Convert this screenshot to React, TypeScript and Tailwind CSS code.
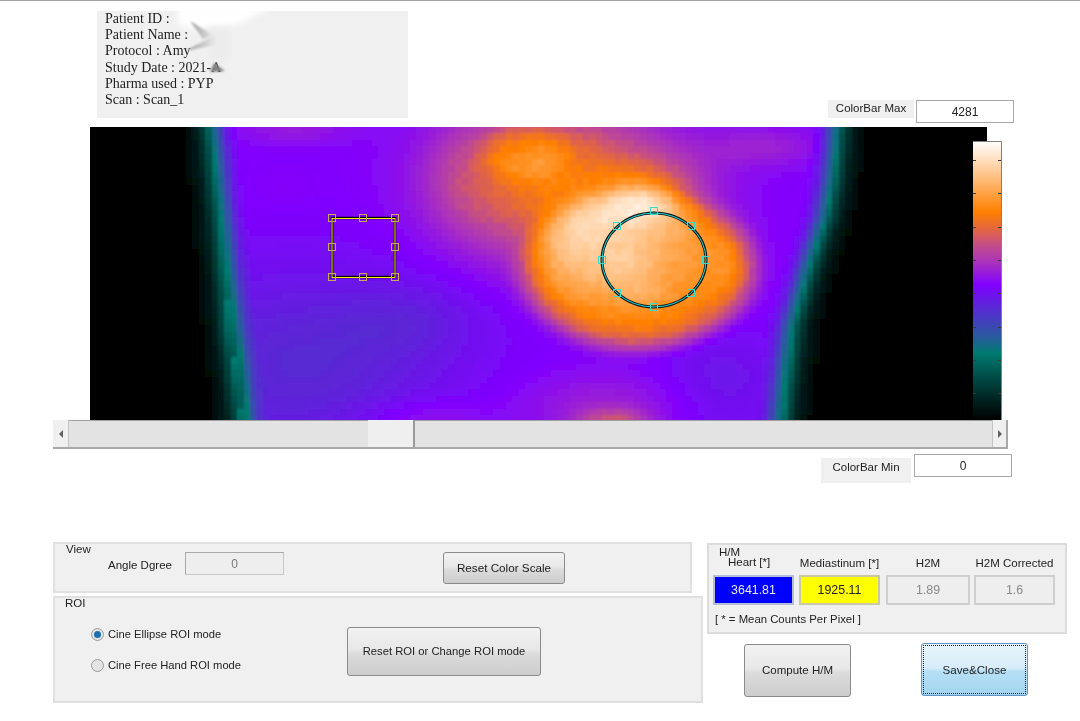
const STOPS: [number, string][] = [
  [0, "#000000"],
  [0.12, "#003a36"],
  [0.24, "#007a70"],
  [0.3, "#2a5aa0"],
  [0.484, "#8000ff"],
  [0.56, "#a830c0"],
  [0.62, "#c04a90"],
  [0.67, "#dc6050"],
  [0.745, "#ff8000"],
  [0.87, "#ffbf80"],
  [1, "#ffffff"],
];

function lerp(points: number[][], x: number) {
  if (x <= points[0][0]) return points[0][1];
  for (let i = 1; i < points.length; i++) {
    if (x <= points[i][0]) {
      const [x0, y0] = points[i - 1];
      const [x1, y1] = points[i];
      return y0 + ((y1 - y0) * (x - x0)) / (x1 - x0);
    }
  }
  return points[points.length - 1][1];
}

function colorAt(t: number) {
  let i = 1;
  while (i < STOPS.length - 1 && t > STOPS[i][0]) i++;
  const [t0, c0] = STOPS[i - 1];
  const [t1, c1] = STOPS[i];
  const k = Math.min(1, Math.max(0, (t - t0) / (t1 - t0)));
  const ch = (c: string, p: number) => parseInt(c.slice(p, p + 2), 16);
  const r = Math.round(ch(c0, 1) + (ch(c1, 1) - ch(c0, 1)) * k);
  const g = Math.round(ch(c0, 3) + (ch(c1, 3) - ch(c0, 3)) * k);
  const b = Math.round(ch(c0, 5) + (ch(c1, 5) - ch(c0, 5)) * k);
  return `rgb(${r},${g},${b})`;
}

const LEFT = [[127, 211], [235, 222], [330, 230], [420, 242]];
const RIGHT = [[127, 838], [180, 833], [218, 826], [250, 815], [275, 807], [325, 793], [420, 782]];
const RAMP = [[-45, 0], [-28, 0.012], [-15, 0.06], [-5, 0.16], [0, 0.24], [6, 0.3], [16, 0.43], [26, 0.485]];

// [x, y, sx, sy, amp, power] in page pixels
const BLOBS = [
  [525, 153, 36, 24, 0.09, 4],
  [560, 188, 75, 48, 0.25, 2],
  [570, 140, 50, 18, 0.03, 2],
  [470, 170, 28, 38, 0.05, 2],
  [650, 195, 24, 18, 0.09, 2],
  [650, 185, 40, 22, 0.07, 2],
  [638, 270, 104, 72, 0.26, 8],
  [640, 260, 60, 38, 0.05, 2],
  [575, 272, 28, 22, 0.03, 2],
  [625, 268, 22, 14, 0.05, 2],
  [640, 295, 20, 9, 0.05, 2],
  [733, 262, 15, 26, 0.05, 2],
  [612, 420, 24, 8, 0.12, 2],
  [610, 405, 70, 24, 0.05, 2],
  [420, 418, 45, 14, 0.05, 2],
  [763, 147, 42, 14, 0.05, 2],
  [295, 130, 40, 10, 0.04, 2],
  [285, 190, 25, 16, 0.01, 2],
  [300, 365, 110, 70, -0.085, 2],
  [410, 320, 50, 25, -0.035, 2],
  [720, 385, 45, 40, -0.05, 2],
];

function field(x: number, y: number) {
  const d = Math.min(x - lerp(LEFT, y), lerp(RIGHT, y) - x);
  let t = lerp(RAMP, d);
  if (d > 0) {
    for (const [bx, by, sx, sy, amp, p] of BLOBS) {
      const dx = (x - bx) / sx;
      const dy = (y - by) / sy;
      t += amp * Math.exp(-0.5 * Math.pow(dx * dx + dy * dy, p / 2));
    }
    // blocky count noise, only shows up in the hot area
    const n = Math.sin(x * 12.9898 + y * 78.233) * 43758.5453;
    if (t > 0.6) t += (n - Math.floor(n) - 0.5) * 0.025;
  }
  return Math.min(1, Math.max(0, t));
}

const CELL = 6.4;
const CELLS: { x: number; y: number; fill: string }[] = [];
for (let r = -3; r * CELL < 300; r++) {
  for (let c = -3; c * CELL < 905; c++) {
    CELLS.push({
      x: c * CELL,
      y: r * CELL,
      fill: colorAt(field(90 + c * CELL + CELL / 2, 127 + r * CELL + CELL / 2)),
    });
  }
}

const TICKS = [33, 66, 100, 133, 166, 200, 233, 266];

function Handle({ x, y, color }: { x: number; y: number; color: string }) {
  return <rect x={x - 3.5} y={y - 3.5} width={7} height={7} fill="none" stroke={color} strokeWidth={1} />;
}

function Heatmap() {
  const rectPts = [
    [242, 91], [273, 91], [305, 91],
    [242, 120], [305, 120],
    [242, 150], [273, 150], [305, 150],
  ];
  const ellipsePts = [
    [564, 84], [527, 99], [601, 99], [512, 133], [616, 133], [527, 166], [601, 166], [564, 180],
  ];
  return (
    <svg width={912} height={293} viewBox="0 0 912 293" className="block">
      <defs>
        <linearGradient id="bar" x1="0" y1="0" x2="0" y2="1">
          {[...STOPS].reverse().map(([t, c]) => (
            <stop key={t} offset={1 - t} stopColor={c} />
          ))}
        </linearGradient>
        <filter id="soft" filterUnits="userSpaceOnUse" x={-20} y={-20} width={960} height={340}>
          <feGaussianBlur stdDeviation="0.9" />
        </filter>
      </defs>
      <g filter="url(#soft)" shapeRendering="crispEdges">
        {CELLS.map((c) => (
          <rect key={`${c.x}-${c.y}`} x={c.x} y={c.y} width={CELL + 0.5} height={CELL + 0.5} fill={c.fill} />
        ))}
      </g>
      <rect x={897} y={0} width={15} height={14} fill="#ffffff" />
      <rect x={883} y={14} width={29} height={279} fill="#ffffff" />
      <rect x={883} y={14} width={28} height={279} fill="url(#bar)" />
      <path d="M883 14.5H911.5V293" fill="none" stroke="#808080" strokeWidth={1} />
      {TICKS.map((y) => (
        <path key={y} d={`M883 ${y + 0.5}h3M908 ${y + 0.5}h3`} stroke="#3a3a3a" strokeWidth={1} />
      ))}
      <rect x={242} y={91} width={63} height={59} fill="none" stroke="#000000" strokeWidth={2.4} />
      <rect x={242} y={91.5} width={63} height={59} fill="none" stroke="#f0f000" strokeWidth={1} />
      {rectPts.map(([x, y]) => (
        <Handle key={`${x}-${y}`} x={x} y={y} color="#c8a860" />
      ))}
      <ellipse cx={564} cy={133} rx={52} ry={47} fill="none" stroke="#101818" strokeWidth={3} />
      <ellipse cx={564} cy={133} rx={52} ry={47} fill="none" stroke="#20d8d8" strokeWidth={1} />
      {ellipsePts.map(([x, y]) => (
        <Handle key={`${x}-${y}`} x={x} y={y} color="#40d8c8" />
      ))}
    </svg>
  );
}

function Smudge() {
  return (
    <svg width={130} height={80} viewBox="0 0 130 80" className="absolute left-[68px] top-0 pointer-events-none">
      <defs>
        <filter id="smear" x="-20%" y="-20%" width="140%" height="140%">
          <feGaussianBlur stdDeviation="3" />
        </filter>
        <filter id="smear2" x="-20%" y="-20%" width="140%" height="140%">
          <feGaussianBlur stdDeviation="1" />
        </filter>
        <linearGradient id="spike" x1="0" y1="0" x2="1" y2="0">
          <stop offset="0" stopColor="#9a9a9a" />
          <stop offset="1" stopColor="#e8e8e8" />
        </linearGradient>
      </defs>
      <path d="M12 -4H106L76 12L36 20L14 14Z" fill="#ffffff" filter="url(#smear)" />
      <path d="M40 16H64V50H46Z" fill="#ececec" filter="url(#smear)" />
      <path d="M25 10L48 24L38 28Z" fill="url(#spike)" filter="url(#smear2)" />
      <path d="M20 40L50 24V34Z" fill="url(#spike)" filter="url(#smear2)" />
      <path d="M60 60L49 52L45 61Z" fill="#808080" filter="url(#smear2)" />
    </svg>
  );
}

function Scrollbar() {
  return (
    <div className="ml-[53px] flex h-[29px] w-[955px] border-b-2 border-[#a8a8a8] bg-[#e3e3e3]">
      <div className="flex w-[16px] items-center justify-center border-r border-[#c4c4c4] bg-[#f0f0f0]">
        <div className="h-0 w-0 border-y-[4px] border-r-[4px] border-y-transparent border-r-[#606060]" />
      </div>
      <div className="w-[299px] border-t border-[#a0a0a0]" />
      <div className="w-[47px] border-r-2 border-[#9a9a9a] bg-[#efefef]" />
      <div className="flex-1 border-t border-[#a0a0a0]" />
      <div className="flex w-[16px] items-center justify-center border-r-2 border-l border-[#a8a8a8] border-l-[#c4c4c4] bg-[#f0f0f0]">
        <div className="h-0 w-0 border-y-[4px] border-l-[4px] border-y-transparent border-l-[#606060]" />
      </div>
    </div>
  );
}

function ValueBox({ value }: { value: string }) {
  return (
    <div className="flex h-[23px] w-[98px] items-center justify-center border border-[#a8a8a8] bg-white text-[12px] text-[#222]">
      {value}
    </div>
  );
}

function GreyButton({ label, className }: { label: string; className: string }) {
  return (
    <button
      className={`flex items-center justify-center rounded-[3px] border border-[#8a8a8a] bg-[linear-gradient(#f2f2f2_0%,#e8e8e8_46%,#dcdcdc_54%,#cccccc_100%)] text-[#222] ${className}`}
    >
      {label}
    </button>
  );
}

function StatBox({ value, className }: { value: string; className: string }) {
  return (
    <div className={`flex h-[30px] items-center justify-center border-2 text-[12.4px] ${className}`}>{value}</div>
  );
}

function Radio({ checked, label }: { checked?: boolean; label: string }) {
  return (
    <div className="flex items-center">
      <div className="flex h-[13px] w-[13px] items-center justify-center rounded-full border border-[#9a9a9a] bg-[#e4e4e4]">
        {checked && <div className="h-[7px] w-[7px] rounded-full bg-[#1c6fb0]" />}
      </div>
      <span className="ml-[4px] text-[11.2px] leading-none text-[#222]">{label}</span>
    </div>
  );
}

export default function App() {
  return (
    <div className="h-[721px] w-[1080px] overflow-hidden border-t border-[#a4a4a4] bg-white text-[#222] blur-[0.4px] [font-family:'Liberation_Sans',Arial,sans-serif]">
      {/* Patient info + colour max */}
      <div className="flex h-[126px]">
        <div className="relative ml-[97px] mt-[10px] h-[107px] w-[311px] bg-[#f0f0f0] pl-[8px] text-[14px] leading-[16.2px] text-[#222] [font-family:'Liberation_Serif',serif]">
          <div>Patient ID :</div>
          <div>Patient Name :</div>
          <div>Protocol : Amy</div>
          <div>Study Date : 2021-A</div>
          <div>Pharma used : PYP</div>
          <div>Scan : Scan_1</div>
          <Smudge />
        </div>
        <div className="ml-[420px] mt-[99px] flex h-[23px] items-start gap-[2px]">
          <div className="flex h-[18px] w-[86px] items-center justify-center bg-[#f0f0f0] text-[11.5px]">ColorBar Max</div>
          <ValueBox value="4281" />
        </div>
      </div>

      <div className="ml-[90px]">
        <Heatmap />
      </div>
      <Scrollbar />

      {/* Colour min */}
      <div className="ml-[821px] mt-[5px] flex h-[29px] items-start gap-[3px]">
        <div className="mt-[4px] flex h-[25px] w-[90px] items-start justify-center bg-[#f0f0f0] pt-[1px] text-[11.5px]">ColorBar Min</div>
        <ValueBox value="0" />
      </div>

      {/* Bottom panels */}
      <div className="ml-[53px] mt-[59px] flex">
        <div className="w-[654px]">
          <div className="relative h-[51px] w-[639px] border-2 border-[#e0e0e0] bg-[#f0f0f0]">
            <span className="absolute left-[11px] top-[-2px] text-[11.5px] leading-[14px]">View</span>
            <div className="ml-[53px] mt-[8px] flex items-start">
              <span className="mt-[6px] w-[77px] text-[11.5px] leading-[14px]">Angle Dgree</span>
              <div className="flex h-[23px] w-[99px] items-center justify-center border border-[#a8a8a8] border-r-[#c8c8c8] border-b-[#c8c8c8] bg-[#eeeeee] text-[12px] text-[#777]">
                0
              </div>
              <GreyButton label="Reset Color Scale" className="ml-[159px] h-[32px] w-[122px] text-[11.7px]" />
            </div>
          </div>
          <div className="relative mt-[3px] h-[107px] w-[650px] border-2 border-[#e0e0e0] bg-[#f0f0f0]">
            <span className="absolute left-[10px] top-[-2px] text-[11.5px] leading-[14px]">ROI</span>
            <div className="ml-[36px] mt-[29px] flex items-start">
              <div className="mt-[1px] flex w-[256px] flex-col gap-[18px]">
                <Radio checked label="Cine Ellipse ROI mode" />
                <Radio label="Cine Free Hand ROI mode" />
              </div>
              <GreyButton label="Reset ROI or Change ROI mode" className="h-[49px] w-[194px] text-[11.25px]" />
            </div>
          </div>
        </div>

        <div className="w-[360px] pt-[1px]">
          <div className="relative h-[91px] border-2 border-[#dcdcdc] bg-[#f0f0f0]">
            <span className="absolute left-[10px] top-[0px] text-[11.5px] leading-[14px]">H/M</span>
            <div className="ml-[4px] mt-[10px] flex text-[11.5px] leading-[14px]">
              <span className="w-[81px] pl-[15px]">Heart [*]</span>
              <span className="ml-[5px] mt-[1px] w-[81px] text-center">Mediastinum [*]</span>
              <span className="ml-[6px] mt-[1px] w-[84px] text-center">H2M</span>
              <span className="ml-[4px] mt-[1px] w-[81px] whitespace-nowrap text-center">H2M Corrected</span>
            </div>
            <div className="ml-[4px] mt-[5px] flex">
              <StatBox value="3641.81" className="w-[81px] border-[#b4bcd8] bg-[#0000ff] text-[#e8e8ff]" />
              <StatBox value="1925.11" className="ml-[5px] w-[81px] border-[#c8c8a8] bg-[#ffff00] text-[#222]" />
              <StatBox value="1.89" className="ml-[6px] w-[84px] border-[#cfcfcf] bg-[#eeeeee] text-[#888]" />
              <StatBox value="1.6" className="ml-[4px] w-[81px] border-[#cfcfcf] bg-[#eeeeee] text-[#888]" />
            </div>
            <div className="ml-[6px] mt-[7px] text-[11.35px] leading-[14px]">[ * = Mean Counts Per Pixel ]</div>
          </div>
          <div className="mt-[10px] flex items-start">
            <GreyButton label="Compute H/M" className="ml-[37px] h-[53px] w-[107px] text-[11.5px]" />
            <button className="ml-[70px] mt-[-1px] h-[53px] w-[107px] rounded-[3px] border border-[#5f97c6] bg-[linear-gradient(#e8f5fc_0%,#d8edf9_46%,#b6dff5_54%,#a2d5f0_100%)] p-[1px] text-[11.6px] text-[#222]">
              <span className="flex h-full w-full items-center justify-center border border-dotted border-[#222]">Save&amp;Close</span>
            </button>
          </div>
        </div>
      </div>
    </div>
  );
}
